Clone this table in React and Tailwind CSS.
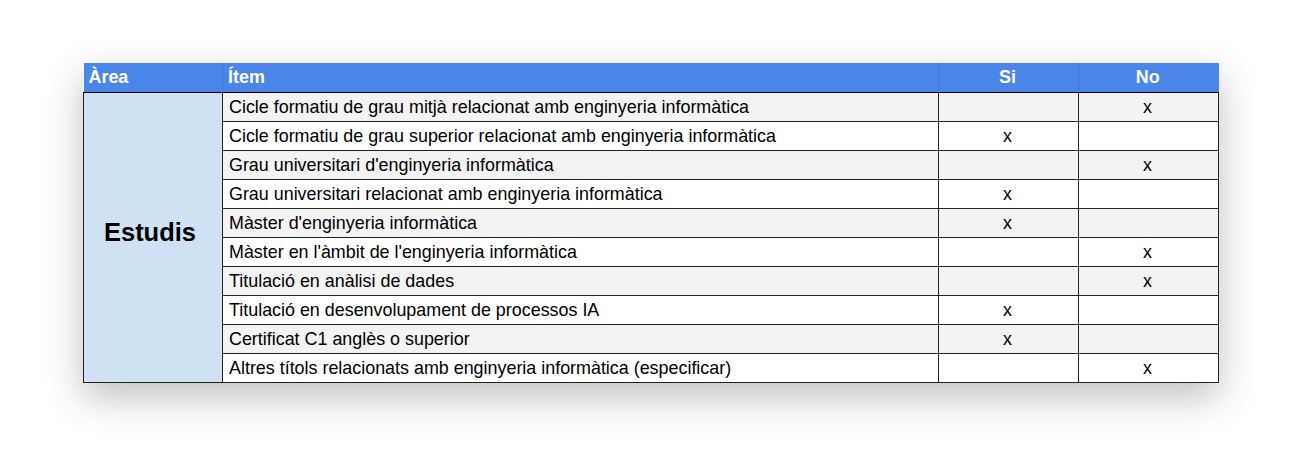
import React from 'react'

const rows = [
  ['Cicle formatiu de grau mitjà relacionat amb enginyeria informàtica', false],
  ['Cicle formatiu de grau superior relacionat amb enginyeria informàtica', true],
  ["Grau universitari d'enginyeria informàtica", false],
  ['Grau universitari relacionat amb enginyeria informàtica', true],
  ["Màster d'enginyeria informàtica", true],
  ["Màster en l'àmbit de l'enginyeria informàtica", false],
  ['Titulació en anàlisi de dades', false],
  ['Titulació en desenvolupament de processos IA', true],
  ['Certificat C1 anglès o superior', true],
  ['Altres títols relacionats amb enginyeria informàtica (especificar)', false],
]

export default function App() {
  return (
    <div className="w-[1300px] h-[450px] bg-white pt-[63px] pl-[83px]" style={{ fontFamily: '"Liberation Sans", Arial, sans-serif' }}>
      <table className="border-collapse w-[1135px] table-fixed text-[17.9px] leading-[20px] text-black shadow-[0_14px_36px_rgba(0,0,0,0.25)]">
        <colgroup>
          <col className="w-[139px]" />
          <col className="w-[716px]" />
          <col className="w-[140px]" />
          <col className="w-[140px]" />
        </colgroup>
        <thead>
          <tr className="h-[29px] bg-[#4a86e8] text-white font-bold">
            <th className="text-left pl-[5px] border-r border-[#3f78d6] border-b border-b-black">Àrea</th>
            <th className="text-left pl-[5px] border-r border-[#3f78d6] border-b border-b-black">Ítem</th>
            <th className="text-center pr-[2px] border-r border-[#3f78d6] border-b border-b-black">Si</th>
            <th className="text-center pr-[2px] border-b border-b-black">No</th>
          </tr>
        </thead>
        <tbody>
          {rows.map(([label, si], i) => (
            <tr key={i} className={`h-[29px] ${i % 2 === 0 ? 'bg-[#f3f3f3]' : 'bg-white'}`}>
              {i === 0 && (
                <td rowSpan={rows.length} className="bg-[#cfe2f3] border border-[#222] text-center align-middle font-bold text-[25.5px] leading-[30px] pb-[10px] pr-[6px]">
                  Estudis
                </td>
              )}
              <td className="border border-[#222] pl-[6px] pt-[1px] whitespace-nowrap">{label}</td>
              <td className="border border-[#222] text-center pr-[2px]">{si ? 'x' : ''}</td>
              <td className="border border-[#222] text-center pr-[2px]">{si ? '' : 'x'}</td>
            </tr>
          ))}
        </tbody>
      </table>
    </div>
  )
}
